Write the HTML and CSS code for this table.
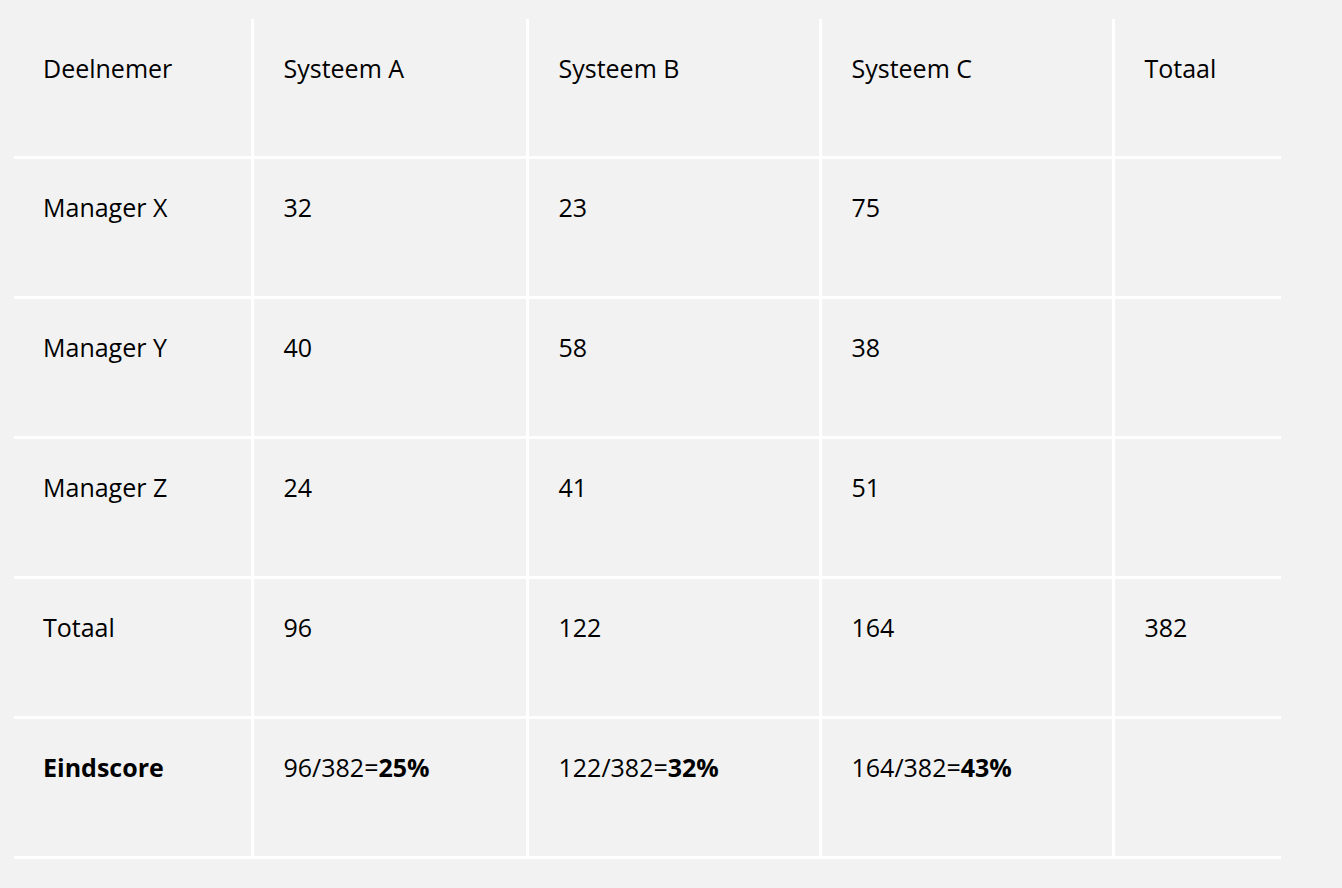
FILE: index.html
```html
<!DOCTYPE html>
<html>
<head>
<meta charset="utf-8">
<link rel="stylesheet" href="styles.css">
</head>
<body>
<div class="page">
  <table class="scores">
    <colgroup>
      <col class="c1"><col class="c2"><col class="c3"><col class="c4"><col class="c5">
    </colgroup>
    <tbody>
      <tr class="head"><td>Deelnemer</td><td>Systeem A</td><td>Systeem B</td><td>Systeem C</td><td>Totaal</td></tr>
      <tr><td>Manager X</td><td>32</td><td>23</td><td>75</td><td></td></tr>
      <tr><td>Manager Y</td><td>40</td><td>58</td><td>38</td><td></td></tr>
      <tr><td>Manager Z</td><td>24</td><td>41</td><td>51</td><td></td></tr>
      <tr><td>Totaal</td><td>96</td><td>122</td><td>164</td><td>382</td></tr>
      <tr><td><strong>Eindscore</strong></td><td>96/382=<strong>25%</strong></td><td>122/382=<strong>32%</strong></td><td>164/382=<strong>43%</strong></td><td></td></tr>
    </tbody>
  </table>
</div>
</body>
</html>
```
FILE: styles.css
```css
html, body {
  margin: 0;
  background: #f2f2f2;
}
.page {
  padding: 19px 14px;
}
.scores {
  border-collapse: collapse;
  table-layout: fixed;
  width: 1267px;
  font-family: "Open Sans", sans-serif;
  font-size: 25px;
  color: #000;
}
.c1 { width: 238px; }
.c2 { width: 275px; }
.c3 { width: 293px; }
.c4 { width: 293px; }
.c5 { width: 168px; }
.scores td {
  height: 140px;
  box-sizing: border-box;
  vertical-align: top;
  padding: 30px 20px 0 30px;
  line-height: 36px;
  border-bottom: 3px solid #fff;
  border-right: 3px solid #fff;
}
.scores .head td {
  height: 138px;
  padding-top: 31px;
}
.scores td:last-child {
  border-right: none;
}
.scores td:first-child { padding-left: 29px; }
.scores strong { font-weight: 700; }
```
